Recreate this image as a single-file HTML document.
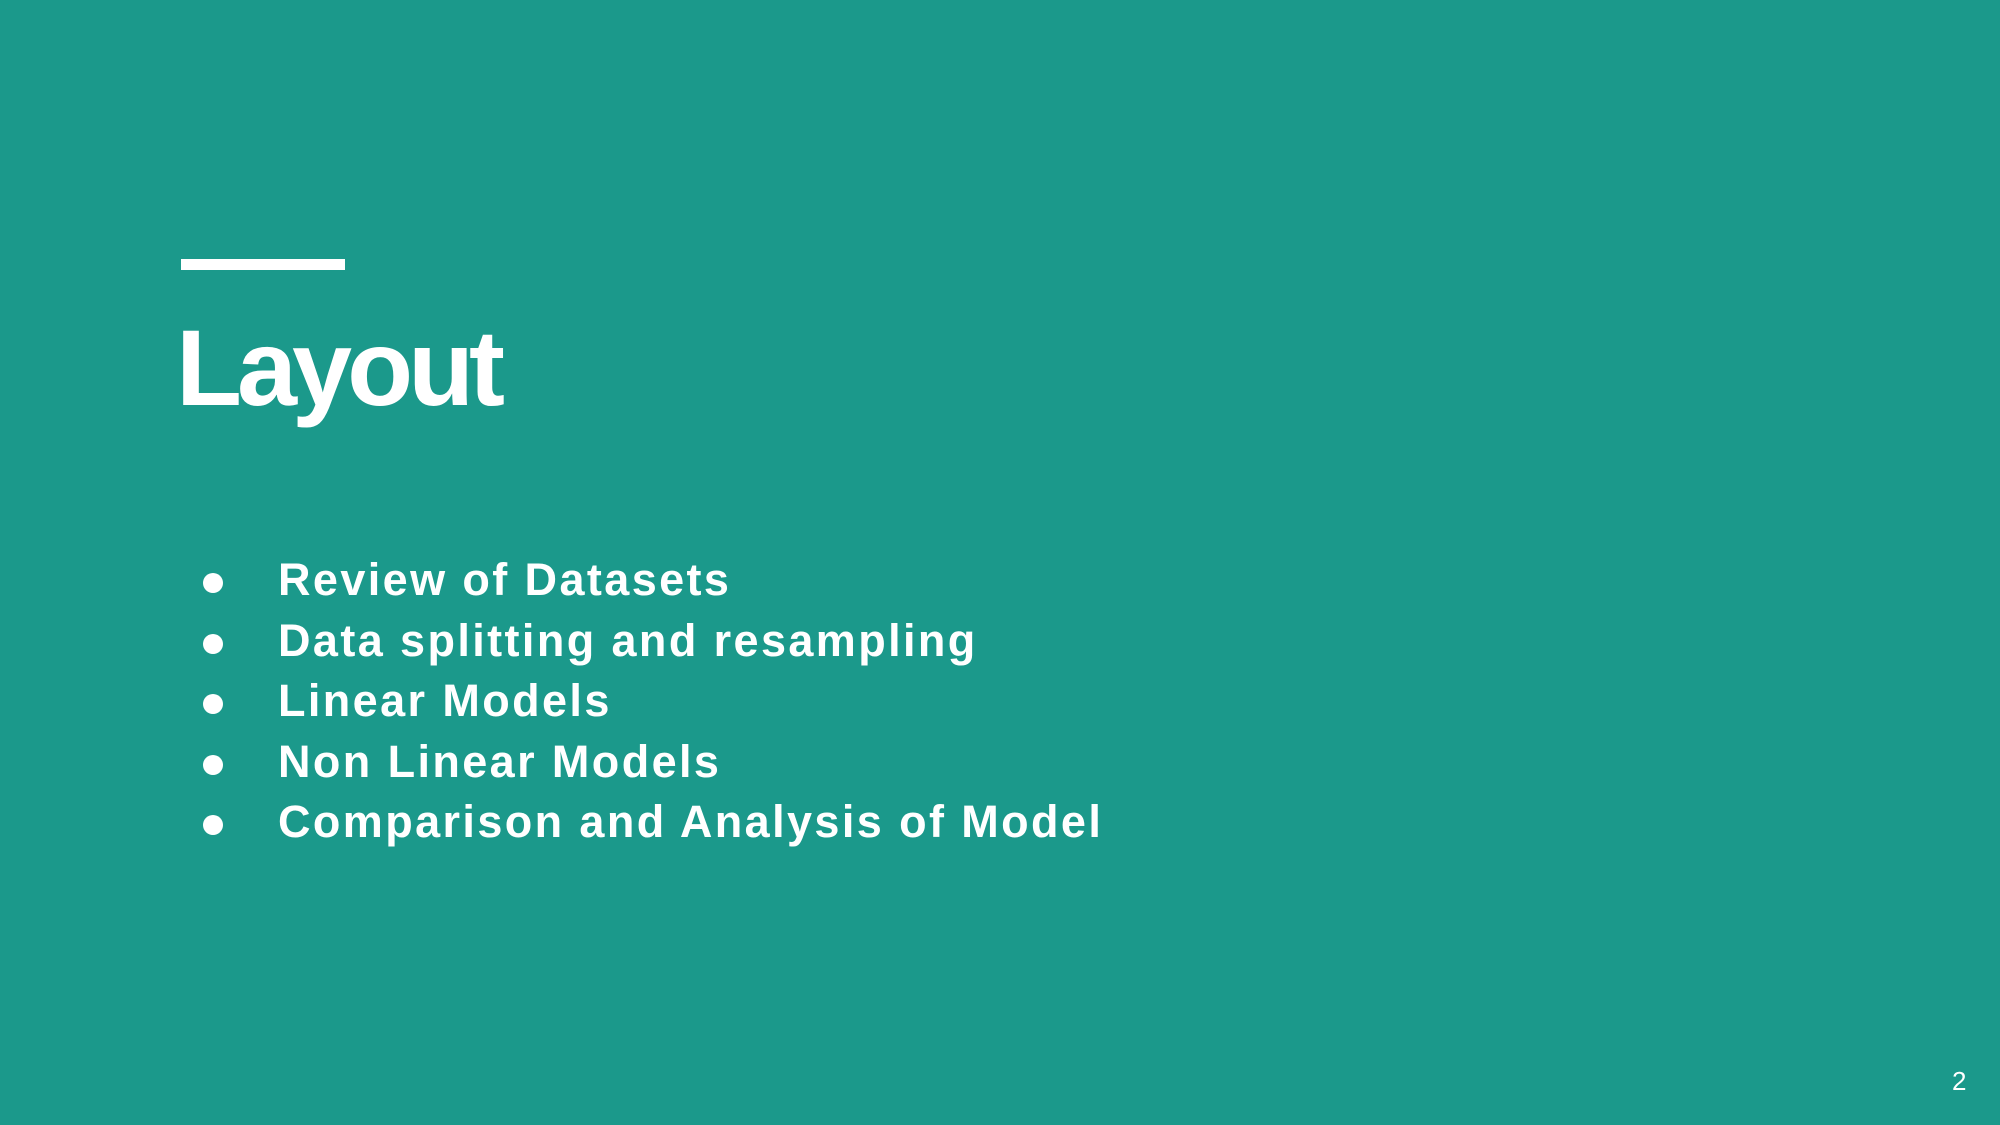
<!DOCTYPE html>
<html><head><meta charset="utf-8"><style>
html,body{margin:0;padding:0;}
body{width:2000px;height:1125px;background:#1b998b;position:relative;overflow:hidden;font-family:"Liberation Sans",sans-serif;color:#fff;}
.bar{position:absolute;left:181px;top:259px;width:164px;height:11px;background:#fff;}
.title{position:absolute;left:176px;top:303px;font-size:108px;font-weight:bold;line-height:130px;letter-spacing:-5px;}
ul{position:absolute;left:0;top:550px;margin:0;padding:0;list-style:none;}
li{position:relative;padding-left:278px;font-size:45px;font-weight:bold;line-height:60.5px;height:60.5px;white-space:nowrap;letter-spacing:2.4px;}
li:before{content:"";position:absolute;left:203px;top:23px;width:20px;height:20px;border-radius:50%;background:#fff;}
.num{position:absolute;left:1952px;top:1066px;font-size:26px;}
</style></head><body>
<div class="bar"></div>
<div class="title">Layout</div>
<ul>
<li>Review of Datasets</li>
<li>Data splitting and resampling</li>
<li>Linear Models</li>
<li>Non Linear Models</li>
<li>Comparison and Analysis of Model</li>
</ul>
<div class="num">2</div>
</body></html>
